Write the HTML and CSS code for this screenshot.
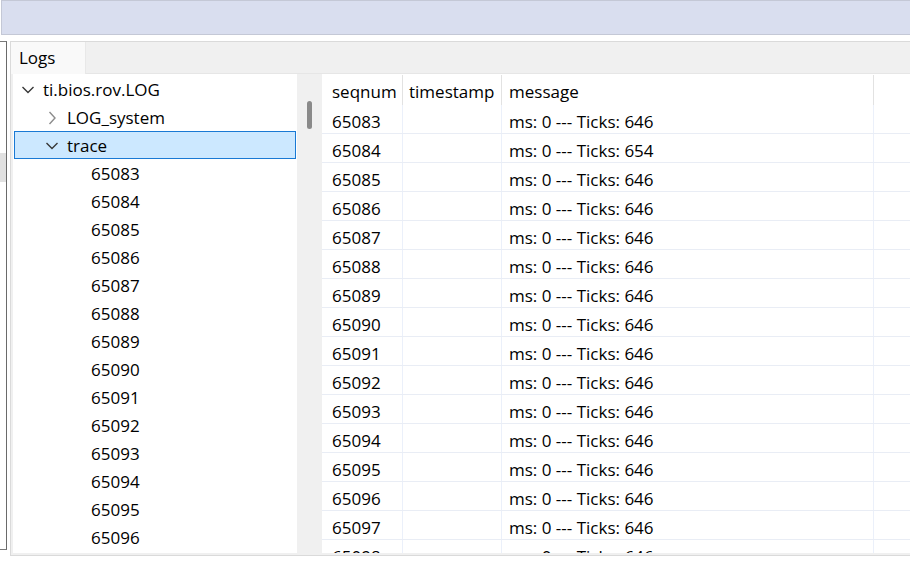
FILE: index.html
```html
<!DOCTYPE html>
<html>
<head>
<meta charset="utf-8">
<link rel="stylesheet" href="styles.css">
</head>
<body>
<div class="topbar"></div>
<div class="main">
  <div class="stub"><div class="stub-block"></div></div>
  <div class="panel">
    <div class="tabs"><div class="tab">Logs</div></div>
    <div class="body">
      <div class="tree">
        <div class="node l0"><span class="chev dark"><svg width="16" height="16" viewBox="0 0 16 16"><polyline points="2.5,5 8,10.5 13.5,5" fill="none" stroke="currentColor" stroke-width="1.4"/></svg></span><span>ti.bios.rov.LOG</span></div>
        <div class="node l1"><span class="chev light"><svg width="16" height="16" viewBox="0 0 16 16"><polyline points="5.5,2 11,8 5.5,14" fill="none" stroke="currentColor" stroke-width="1.4"/></svg></span><span>LOG_system</span></div>
        <div class="node l1 selected"><span class="chev dark"><svg width="16" height="16" viewBox="0 0 16 16"><polyline points="2.5,5 8,10.5 13.5,5" fill="none" stroke="currentColor" stroke-width="1.4"/></svg></span><span>trace</span></div>
        <div class="node l2"><span>65083</span></div>
        <div class="node l2"><span>65084</span></div>
        <div class="node l2"><span>65085</span></div>
        <div class="node l2"><span>65086</span></div>
        <div class="node l2"><span>65087</span></div>
        <div class="node l2"><span>65088</span></div>
        <div class="node l2"><span>65089</span></div>
        <div class="node l2"><span>65090</span></div>
        <div class="node l2"><span>65091</span></div>
        <div class="node l2"><span>65092</span></div>
        <div class="node l2"><span>65093</span></div>
        <div class="node l2"><span>65094</span></div>
        <div class="node l2"><span>65095</span></div>
        <div class="node l2"><span>65096</span></div>
      </div>
      <div class="vscroll"><div class="thumb"></div></div>
      <div class="table">
        <div class="thead">
          <div class="c seq">seqnum</div><div class="c ts">timestamp</div><div class="c msg">message</div><div class="c rest"></div>
        </div>
        <div class="row"><div class="c seq">65083</div><div class="c ts"></div><div class="c msg">ms: 0 --- Ticks: 646</div><div class="c rest"></div></div>
        <div class="row"><div class="c seq">65084</div><div class="c ts"></div><div class="c msg">ms: 0 --- Ticks: 654</div><div class="c rest"></div></div>
        <div class="row"><div class="c seq">65085</div><div class="c ts"></div><div class="c msg">ms: 0 --- Ticks: 646</div><div class="c rest"></div></div>
        <div class="row"><div class="c seq">65086</div><div class="c ts"></div><div class="c msg">ms: 0 --- Ticks: 646</div><div class="c rest"></div></div>
        <div class="row"><div class="c seq">65087</div><div class="c ts"></div><div class="c msg">ms: 0 --- Ticks: 646</div><div class="c rest"></div></div>
        <div class="row"><div class="c seq">65088</div><div class="c ts"></div><div class="c msg">ms: 0 --- Ticks: 646</div><div class="c rest"></div></div>
        <div class="row"><div class="c seq">65089</div><div class="c ts"></div><div class="c msg">ms: 0 --- Ticks: 646</div><div class="c rest"></div></div>
        <div class="row"><div class="c seq">65090</div><div class="c ts"></div><div class="c msg">ms: 0 --- Ticks: 646</div><div class="c rest"></div></div>
        <div class="row"><div class="c seq">65091</div><div class="c ts"></div><div class="c msg">ms: 0 --- Ticks: 646</div><div class="c rest"></div></div>
        <div class="row"><div class="c seq">65092</div><div class="c ts"></div><div class="c msg">ms: 0 --- Ticks: 646</div><div class="c rest"></div></div>
        <div class="row"><div class="c seq">65093</div><div class="c ts"></div><div class="c msg">ms: 0 --- Ticks: 646</div><div class="c rest"></div></div>
        <div class="row"><div class="c seq">65094</div><div class="c ts"></div><div class="c msg">ms: 0 --- Ticks: 646</div><div class="c rest"></div></div>
        <div class="row"><div class="c seq">65095</div><div class="c ts"></div><div class="c msg">ms: 0 --- Ticks: 646</div><div class="c rest"></div></div>
        <div class="row"><div class="c seq">65096</div><div class="c ts"></div><div class="c msg">ms: 0 --- Ticks: 646</div><div class="c rest"></div></div>
        <div class="row"><div class="c seq">65097</div><div class="c ts"></div><div class="c msg">ms: 0 --- Ticks: 646</div><div class="c rest"></div></div>
        <div class="row"><div class="c seq">65098</div><div class="c ts"></div><div class="c msg">ms: 0 --- Ticks: 646</div><div class="c rest"></div></div>
      </div>
    </div>
  </div>
</div>
</body>
</html>
```

FILE: styles.css
```css
* { box-sizing: border-box; }
html, body { margin: 0; padding: 0; background: #ffffff; overflow: hidden; }
body {
  width: 910px;
  height: 565px;
  font-family: "Open Sans", "Noto Sans", sans-serif;
  font-size: 17px;
  color: #000;
}
.topbar {
  height: 35px;
  margin-left: 1px;
  background: #d9deef;
  border: 1px solid #c4c8d6;
  border-right: none;
}
.main {
  display: flex;
  margin-top: 6px;
  height: 515px;
}
.stub {
  width: 7px;
  height: 509px;
  flex: none;
  border-top: 1px solid #7a7a7a;
  border-bottom: 1px solid #7a7a7a;
  border-right: 1px solid #6a6a6a;
  padding-top: 111px;
}
.stub-block {
  width: 6px;
  height: 29px;
  background: #e1e1e1;
}
.panel {
  flex: none;
  width: 910px;
  margin-left: 3px;
  border: 1px solid #dadada;
  background: #f0f0f0;
  display: flex;
  flex-direction: column;
}
.tabs {
  height: 32px;
  flex: none;
  display: flex;
  background: #f0f0f0;
  border-bottom: 1px solid #e6e6e6;
}
.tab {
  width: 75px;
  height: 32px;
  background: #f9f9f9;
  border-right: 1px solid #e8e8e8;
  padding-left: 8px;
  line-height: 31px;
}
.body {
  flex: 1;
  display: flex;
  padding-left: 2px;
  padding-bottom: 2px;
  min-height: 0;
}
.tree {
  width: 284px;
  flex: none;
  background: #fff;
  padding-top: 1px;
  overflow: hidden;
}
.node {
  height: 28px;
  line-height: 26px;
  padding-top: 2px;
  display: flex;
  align-items: center;
  white-space: nowrap;
}
.node.l0 { padding-left: 7px; }
.node.l1 { padding-left: 31px; }
.node.l2 { padding-left: 78px; }
.node.selected {
  margin-left: 1px;
  width: 282px;
  padding-left: 29px;
  padding-top: 1px;
  background: #cce8ff;
  border: 1px solid #1979d4;
}
.chev {
  width: 16px;
  height: 16px;
  margin-right: 7px;
  display: flex;
}
.chev.dark { color: #383838; }
.chev.light { color: #8c8c8c; }
.vscroll {
  width: 25px;
  flex: none;
  background: #f0f0f0;
  padding-top: 27px;
  padding-left: 10px;
}
.thumb {
  width: 5px;
  height: 28px;
  border-radius: 3px;
  background: #8a8a8a;
}
.table {
  flex: 1;
  background: #fff;
  overflow: hidden;
  min-width: 0;
}
.thead {
  display: flex;
  height: 31px;
  padding-top: 1px;
}
.thead .c {
  height: 30px;
  padding-top: 3px;
  line-height: 27px;
  border-right: 1px solid #e2e2e2;
}
.thead .c.rest { border-right: none; }
.row {
  display: flex;
  height: 29px;
  border-bottom: 1px solid #e9edf5;
}
.row .c {
  height: 28px;
  padding-top: 5px;
  line-height: 23px;
  border-right: 1px solid #ebf0fa;
  white-space: nowrap;
}
.row .c.rest { border-right: none; }
.c.seq { width: 81px; padding-left: 10px; flex: none; }
.c.ts { width: 99px; padding-left: 6px; flex: none; }
.c.msg { width: 372px; padding-left: 7px; flex: none; }
.c.rest { flex: 1; }
```
